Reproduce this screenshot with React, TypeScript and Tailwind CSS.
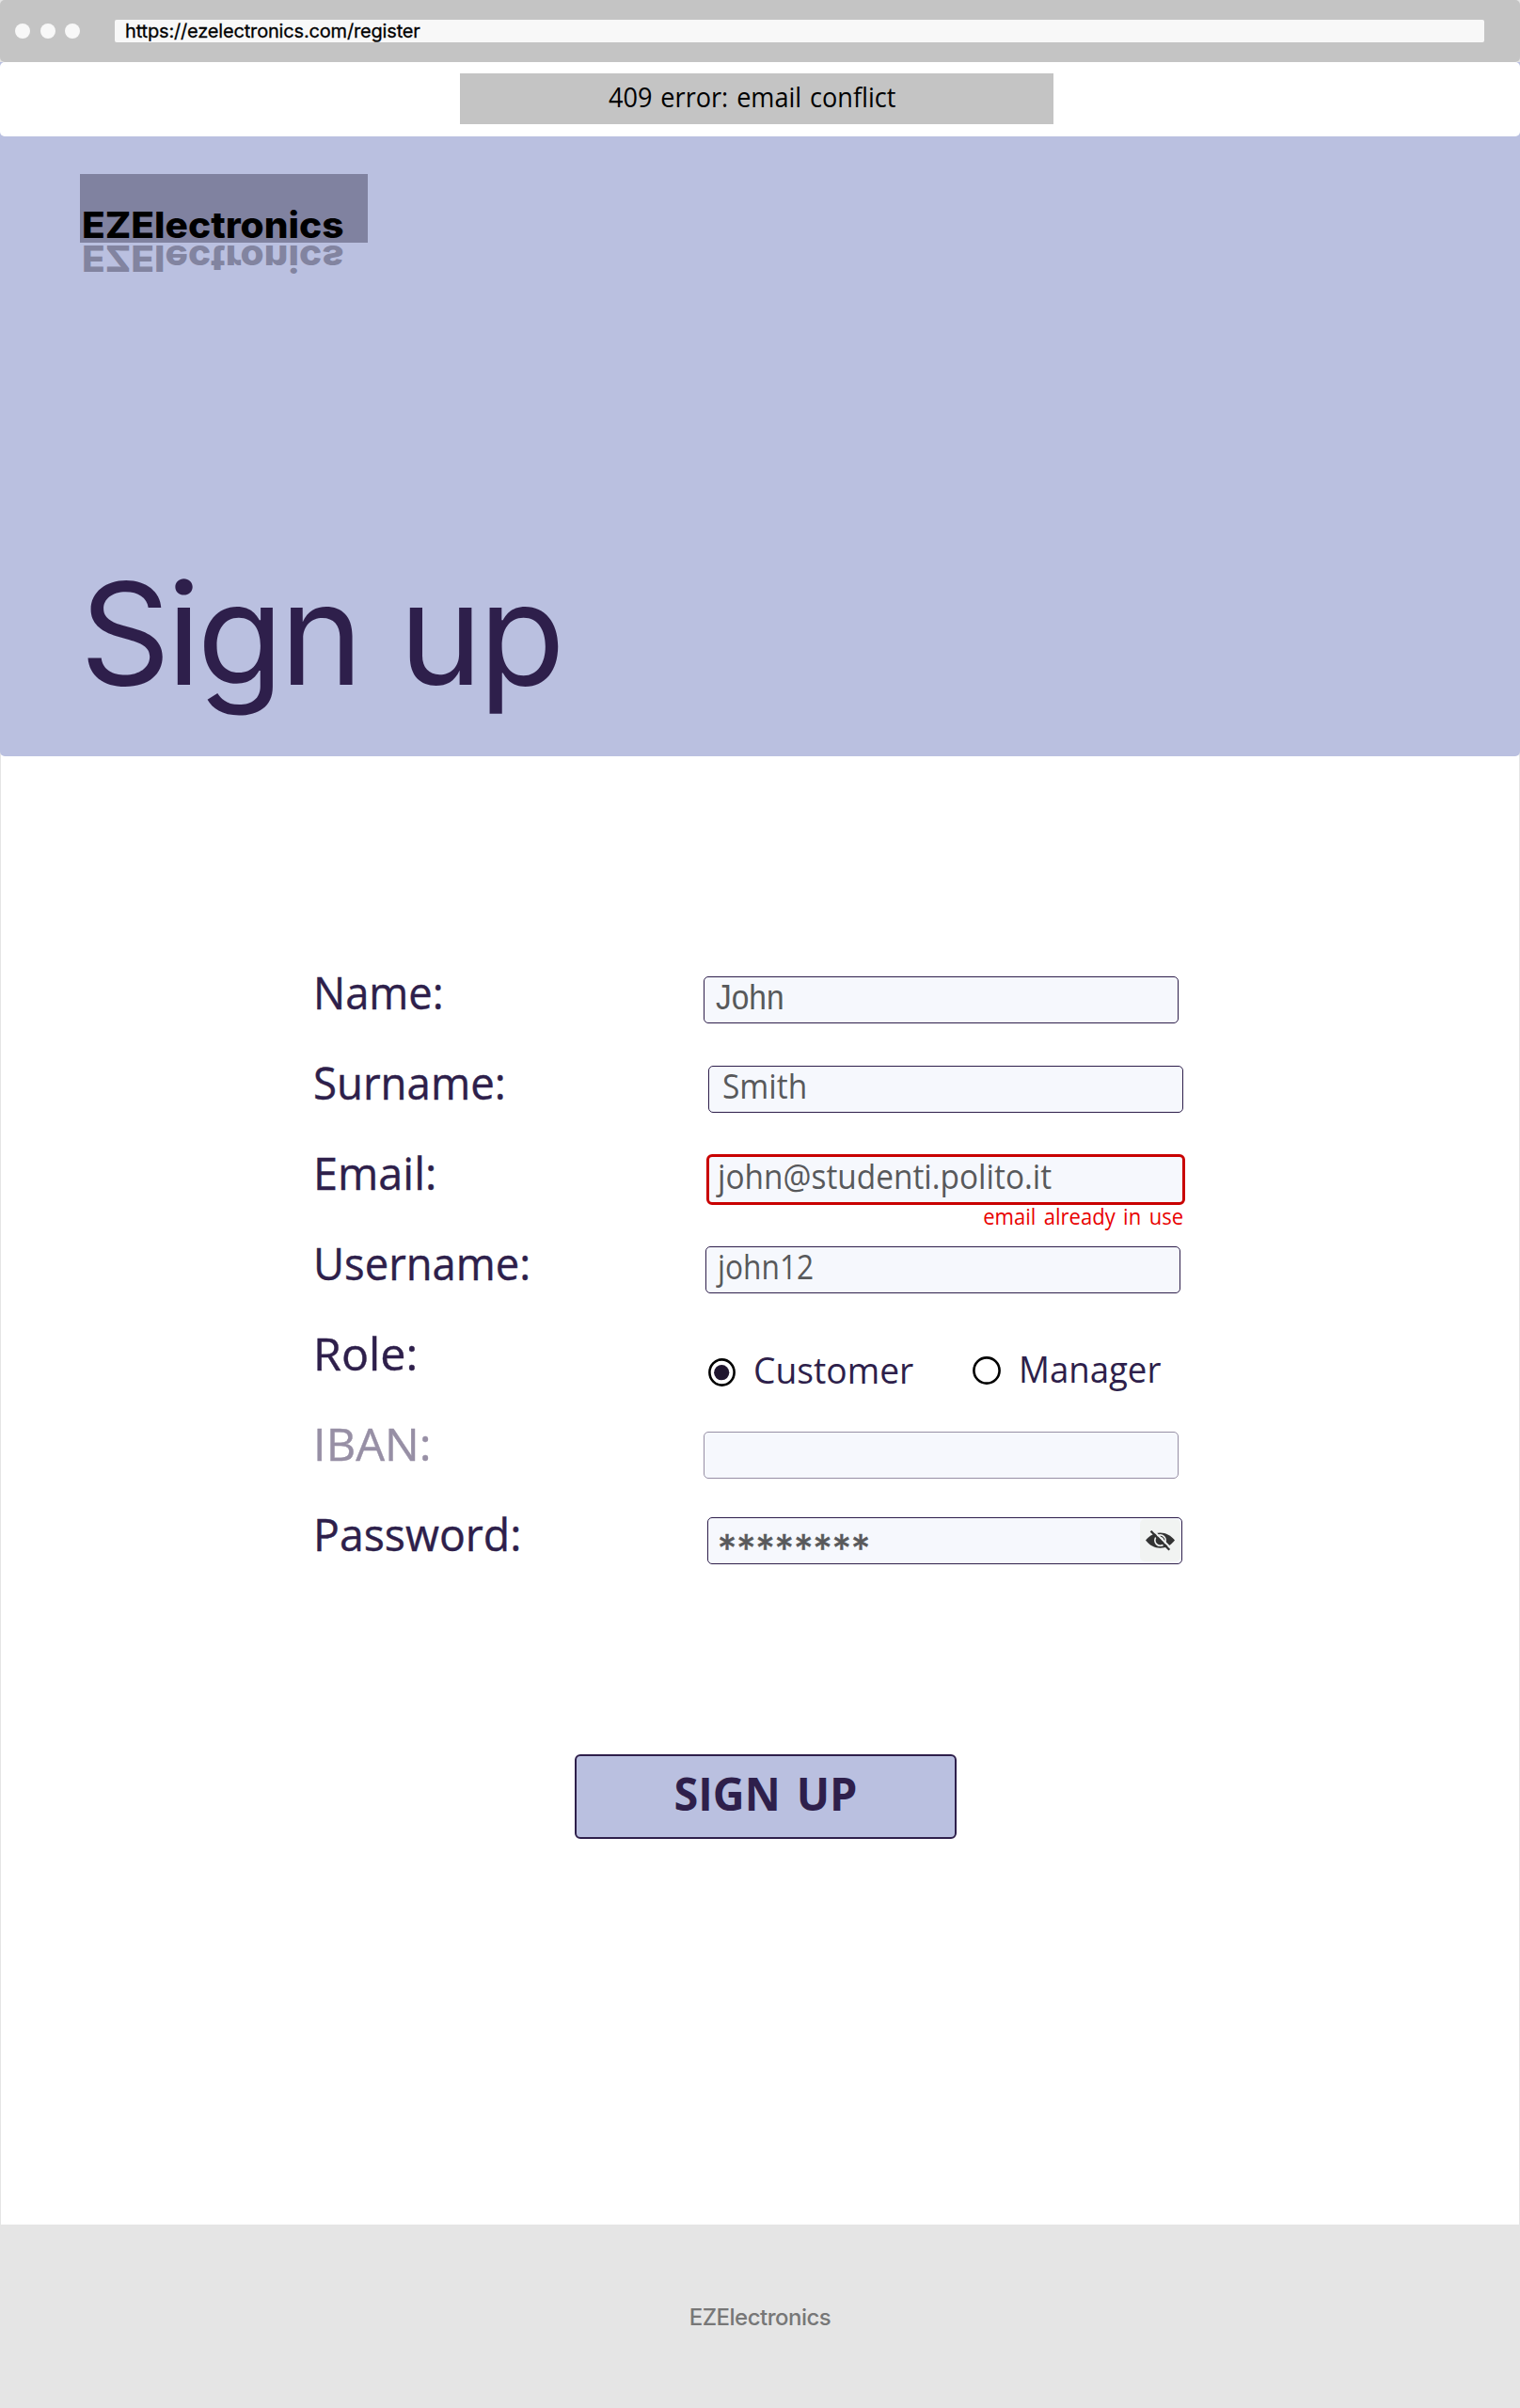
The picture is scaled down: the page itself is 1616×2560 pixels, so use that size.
import React from "react";

type RowProps = {
  label: string;
  fit: string;
  field: string;
  children: React.ReactNode;
  muted?: boolean;
};

function Row({ label, fit, field, children, muted }: RowProps) {
  return (
    <div className="flex h-24 items-start">
      <label
        className={
          "w-[414px] shrink-0 text-[48px] leading-[52px] " +
          (muted ? "text-[#978fa5]" : "text-[#2e1f4b]")
        }
      >
        <span className={"inline-block origin-left [-webkit-text-stroke:0.4px] " + fit}>{label}</span>
      </label>
      <div className={field}>{children}</div>
    </div>
  );
}

const box =
  "flex h-[50px] w-[505px] rounded-[5px] border border-[#2e1f4b] bg-[#f6f8fd] text-[36px] text-[#58595b]";
const value = "mt-[3px] inline-block origin-left leading-[35px] ";

function EyeOff() {
  return (
    <svg className="h-[22px] w-[31px]" viewBox="0 0 31 22" fill="none">
      <path d="M0 10.6C4 5.4 9.3 2.4 15.5 2.4S27 5.4 31 10.6C27 15.8 21.7 18.8 15.5 18.8S4 15.8 0 10.6Z" fill="#333" />
      <circle cx="15.5" cy="10.6" r="5.7" stroke="#f1f3f2" strokeWidth="1.6" />
      <path d="M15.5 7.8a3 3 0 0 1 3 3" stroke="#f1f3f2" strokeWidth="1.6" />
      <path d="M7 -1L28 20" stroke="#f1f3f2" strokeWidth="2" />
      <path d="M5.5 0.7L25.3 20.8" stroke="#333" strokeWidth="2.3" />
    </svg>
  );
}

export default function App() {
  return (
    <div className="flex h-[2560px] w-[1616px] flex-col bg-[#e5e5e5] font-['Open_Sans','Noto_Sans',sans-serif]">
      <div className="flex h-[66px] shrink-0 items-center rounded-[5px] bg-[#c4c4c4] pl-4">
        <div className="flex gap-[10.5px]">
          <span className="size-4 rounded-full bg-[#f8f8f8]" />
          <span className="size-4 rounded-full bg-[#f8f8f8]" />
          <span className="size-4 rounded-full bg-[#f8f8f8]" />
        </div>
        <div className="ml-[37px] flex h-6 w-[1456px] items-center rounded-[2px] bg-[#f8f8f8] pl-[11px] font-['Inter',sans-serif] text-[20px] tracking-[-0.17px] text-black [-webkit-text-stroke:0.3px]">
          https://ezelectronics.com/register
        </div>
      </div>

      <div className="shrink-0 bg-[#bac0e0]">
        <div className="flex h-[79px] rounded-[5px] bg-white pl-[489px] pt-3">
          <div className="h-[54px] w-[631px] bg-[#c4c4c4] pl-[158px] pt-[11px] text-[29.3px] leading-[29px] text-black">
            <span className="inline-block origin-left scale-x-[0.925] whitespace-nowrap [word-spacing:2px]">
              409 error: email conflict
            </span>
          </div>
        </div>
      </div>

      <div className="flex min-h-0 flex-1 flex-col border-x border-[#e5e5e5] bg-white">
        <header className="-mx-px flex h-[659px] shrink-0 flex-col rounded-b-[5px] bg-[#bac0e0] pl-[85px] pt-10">
          <div className="h-[73px] w-[306px] bg-[#8082a0] pl-[2px] pt-[36px] font-['Inter',sans-serif] text-[38.5px] font-extrabold leading-[36px] text-black">
            <span className="inline-block origin-left scale-x-[1.055]">EZElectronics</span>
          </div>
          <div
            aria-hidden="true"
            className="h-[40px] w-[306px] -scale-y-100 pl-[2px] pt-[6px] font-['Inter',sans-serif] text-[38.5px] font-extrabold leading-[34px] text-[#8284a0]"
          >
            <span className="inline-block origin-left scale-x-[1.055]">EZElectronics</span>
          </div>
          <h1 className="mt-[286px] font-['Inter',sans-serif] text-[150px] leading-[180px] tracking-[-4px] text-[#2e1f4b] [word-spacing:4px]">
            Sign up
          </h1>
        </header>

        <form className="mt-[225px] flex flex-col pl-[332px]">
          <Row label="Name:" fit="scale-x-[0.945]" field="pt-[9px] pl-px">
            <div className={box + " pl-3"}>
              <span className="mt-[3px] inline-block origin-left scale-x-[0.93] font-['Liberation_Sans',sans-serif] leading-[38px]">
                John
              </span>
            </div>
          </Row>
          <Row label="Surname:" fit="scale-x-[0.95]" field="pt-[8px] pl-[6px]">
            <div className={box + " pl-[14px]"}>
              <span className={value + "scale-x-[0.93]"}>Smith</span>
            </div>
          </Row>
          <Row label="Email:" fit="scale-x-[0.975]" field="pt-[6px] pl-[4px]">
            <div className="flex h-[54px] w-[509px] rounded-[6px] border-[3px] border-[#c90000] bg-[#f6f8fd] pl-[9px] text-[36px] text-[#58595b]">
              <span className={value + "scale-x-[0.928]"}>john@studenti.polito.it</span>
            </div>
            <div className="-mt-[2px] w-[507px] text-right text-[24px] leading-[27px] text-[#e90000]">
              <span className="inline-block origin-right scale-x-[0.917] [word-spacing:3px]">
                email already in use
              </span>
            </div>
          </Row>
          <Row label="Username:" fit="scale-x-[0.945]" field="pt-[8px] pl-[3px]">
            <div className={box + " pl-[12px]"}>
              <span className={value + "scale-x-[0.88]"}>john12</span>
            </div>
          </Row>
          <Row label="Role:" fit="scale-x-[1.01]" field="pt-[29px] pl-[6px]">
            <div className="flex text-[38.4px] text-[#2e1f4b]">
              <svg className="mt-[2px] h-[30px] w-[29px]" viewBox="0 0 29 30">
                <ellipse cx="14.5" cy="15" rx="13.1" ry="13.6" fill="none" stroke="#000" strokeWidth="2.6" />
                <circle cx="14.2" cy="15.2" r="8.1" fill="#20162f" />
              </svg>
              <span className="ml-[19px] w-[233px] leading-[29px]">
                <span className="inline-block origin-left scale-x-[0.97]">Customer</span>
              </span>
              <svg className="h-[30px] w-[30px]" viewBox="0 0 30 30">
                <circle cx="15" cy="15" r="13.6" fill="none" stroke="#000" strokeWidth="2.6" />
              </svg>
              <span className="ml-[19px] leading-[27px]">
                <span className="inline-block origin-left scale-x-[0.953]">Manager</span>
              </span>
            </div>
          </Row>
          <Row label="IBAN:" fit="scale-x-[1.017]" field="pt-[13px] pl-px" muted>
            <div className="h-[50px] w-[505px] rounded-[5px] border border-[#978fa5] bg-[#f6f8fd]" />
          </Row>
          <Row label="Password:" fit="scale-x-[0.967]" field="pt-[8px] pl-[5px]">
            <div className={box + " justify-between pl-[10px]"}>
              <span className="font-['Inter',sans-serif] text-[40px] leading-[64px] tracking-[0.25px] [-webkit-text-stroke:0.5px]">
                ********
              </span>
              <span className="mr-px mt-px flex h-[45px] w-[43px] items-center justify-center rounded-[5px] bg-[#f1f3f2]">
                <EyeOff />
              </span>
            </div>
          </Row>
        </form>

        <button className="ml-[610px] mt-[164px] h-[90px] w-[406px] shrink-0 rounded-[6px] border-2 border-[#2e1f4b] bg-[#bac0e0] pb-[7px] text-[48px] font-bold leading-[60px] text-[#2e1f4b] [word-spacing:5px]">
          <span className="inline-block scale-x-[0.975]">SIGN UP</span>
        </button>
      </div>

      <footer className="flex h-[195px] shrink-0 items-center justify-center bg-[#e5e5e5] pt-[2px] font-['Inter',sans-serif] text-[24px] font-medium tracking-[-0.5px] text-[#777]">
        EZElectronics
      </footer>
    </div>
  );
}
